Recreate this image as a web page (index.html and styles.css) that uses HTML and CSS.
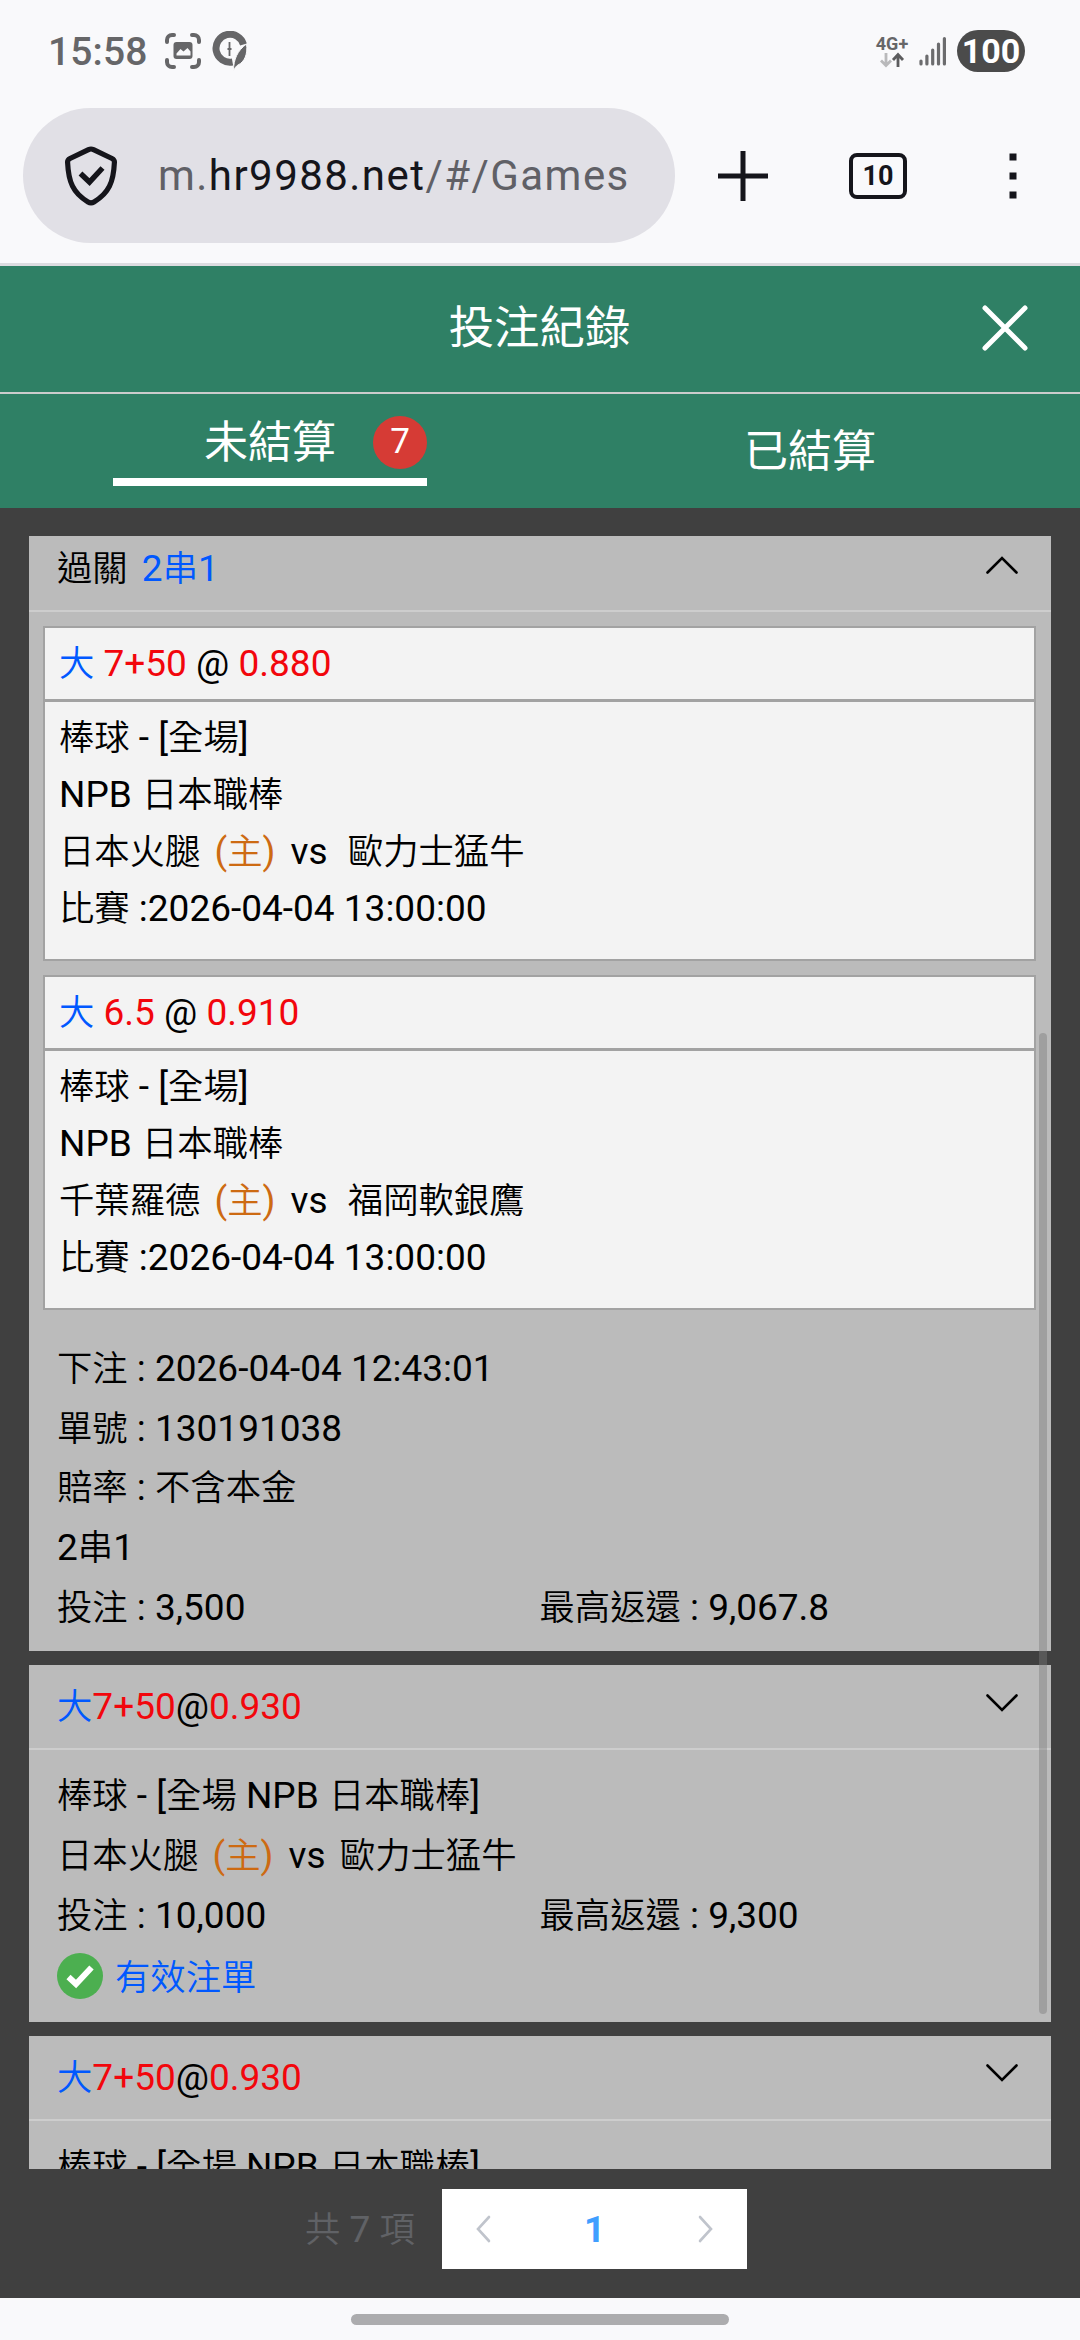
FILE: index.html
```html
<!DOCTYPE html>
<html lang="zh-Hant">
<head>
<meta charset="utf-8">
<title>投注紀錄</title>
<link rel="stylesheet" href="styles.css">
</head>
<body>
<div class="screen">
  <div class="status">
    <span class="clock">15:58</span>
    <svg class="ico-shot" width="36" height="36" viewBox="0 0 36 36" fill="none" stroke="#666668" stroke-width="4" stroke-linecap="round">
      <path d="M2 9V7a5 5 0 0 1 5-5h2M27 2h2a5 5 0 0 1 5 5v2M34 27v2a5 5 0 0 1-5 5h-2M9 34H7a5 5 0 0 1-5-5v-2"/>
      <rect x="8.500" y="9" width="19" height="17" rx="3" fill="#666668" stroke="none"/>
      <path d="M11.500 22.500v-2l4-4.500 3 2.500 4-3.500 3 3.500v4z" fill="#f9f9fb" stroke="none"/>
    </svg>
    <svg class="ico-pen" width="36" height="40" viewBox="0 0 36 40">
      <path d="M31.500 13.500A14 14 0 1 0 20.500 31" fill="none" stroke="#666668" stroke-width="7"/>
      <path d="M34.500 13c1.500 10-2 18-8.500 21-2 1-3 3-4.500 5.500 0-11 4-20 13-26.500z" fill="#666668" stroke="#f9f9fb" stroke-width="1"/>
      <path d="M17.500 11v14M15.500 18h4" stroke="#666668" stroke-width="1.800"/>
    </svg>
    <div class="net">
      <span>4G+</span>
      <svg width="26" height="16" viewBox="0 0 26 16" fill="none" stroke-width="2.800"><path d="M7 1v12M2 8.500l5 5 5-5" stroke="#b9b9bb"/><path d="M19 15V2.500M14 8l5-5.500L24 8" stroke="#5c5c5e"/></svg>
    </div>
    <svg class="signal" width="28" height="30" viewBox="0 0 28 30" stroke="#6c6c6e" stroke-width="3.200" stroke-linecap="round"><path d="M2 25v3M7.900 20v8M13.700 14v14M19.500 8v20M25.400 2.500V28"/></svg>
    <span class="battery">100</span>
  </div>

  <div class="toolbar">
    <div class="address">
      <svg width="54" height="60" viewBox="0 0 54 60" fill="none" stroke="#15151b" stroke-width="5.200" stroke-linejoin="round"><path d="M24.500 3.600q2.500-1.200 5 0L48 12.500q2.600 1.300 2.400 4C49.500 36 45 47 30 56q-3 1.800-6 0C9 47 4.500 36 3.600 16.500q-.2-2.700 2.400-4z"/><path d="M16.500 27.500l9 8.500 13-14" stroke-linejoin="miter" stroke-width="5.500"/></svg>
      <span class="url">m.<b>hr9988.net</b>/#/Games</span>
    </div>
    <svg class="plus" width="50" height="50" viewBox="0 0 50 50" stroke="#15151b" stroke-width="5"><path d="M25 0v50M0 25h50"/></svg>
    <span class="tabs-count">10</span>
    <svg class="more" width="8" height="48" viewBox="0 0 8 48" fill="#15151b"><path d="M.5 1.500h7v7h-7zM.5 20.500h7v7h-7zM.5 39.500h7v7h-7z"/></svg>
  </div>

  <header class="title-bar">
    <h1>投注紀錄</h1>
    <svg class="close" width="46" height="46" viewBox="0 0 46 46" stroke="#fff" stroke-width="5" stroke-linecap="round"><path d="M3 3l40 40M43 3L3 43"/></svg>
  </header>

  <nav class="tabs">
    <div class="tab"><div class="tab-on"><span class="label">未結算</span><i class="badge">7</i></div></div>
    <div class="tab"><span class="label">已結算</span></div>
  </nav>

  <main class="records">
    <div class="list">
      <section class="card">
        <div class="head"><div><span class="zh">過關</span> <span class="blue gap-s">2<span class="zh">串</span>1</span></div>
          <svg class="chev" width="34" height="20" viewBox="0 0 34 20"><path d="M2.500 17.500L17 3l14.500 14.500"/></svg></div>
        <div class="legs">
          <article class="leg">
            <div class="pick"><span class="zh blue">大</span> <span class="red">7+50</span> @ <span class="red">0.880</span></div>
            <div class="info">
              <p><span class="zh">棒球</span> - [<span class="zh">全場</span>]</p>
              <p>NPB <span class="zh gap-xs">日本職棒</span></p>
              <p><span class="zh">日本火腿</span> <span class="home">(<span class="zh">主</span>)</span> <span class="vs">vs</span> <span class="zh away">歐力士猛牛</span></p>
              <p><span class="zh">比賽</span> :2026-04-04 13:00:00</p>
            </div>
          </article>
          <article class="leg">
            <div class="pick"><span class="zh blue">大</span> <span class="red">6.5</span> @ <span class="red">0.910</span></div>
            <div class="info">
              <p><span class="zh">棒球</span> - [<span class="zh">全場</span>]</p>
              <p>NPB <span class="zh gap-xs">日本職棒</span></p>
              <p><span class="zh">千葉羅德</span> <span class="home">(<span class="zh">主</span>)</span> <span class="vs">vs</span> <span class="zh away">福岡軟銀鷹</span></p>
              <p><span class="zh">比賽</span> :2026-04-04 13:00:00</p>
            </div>
          </article>
        </div>
        <div class="body">
          <p><span class="zh">下注</span> : 2026-04-04 12:43:01</p>
          <p><span class="zh">單號</span> : 130191038</p>
          <p><span class="zh">賠率</span> : <span class="zh">不含本金</span></p>
          <p>2<span class="zh">串</span>1</p>
          <div class="money"><p><span class="zh">投注</span> : 3,500</p><p><span class="zh">最高返還</span> : 9,067.8</p></div>
        </div>
      </section>

      <section class="card">
        <div class="head"><div><span class="zh blue">大</span><span class="red">7+50</span>@<span class="red">0.930</span></div>
          <svg class="chev" width="34" height="20" viewBox="0 0 34 20"><path d="M2.500 2.500L17 17 31.500 2.500"/></svg></div>
        <div class="body">
          <p><span class="zh">棒球</span> - [<span class="zh">全場</span> NPB <span class="zh gap-xs">日本職棒</span>]</p>
          <p><span class="zh">日本火腿</span> <span class="home">(<span class="zh">主</span>)</span> <span class="vs">vs</span> <span class="zh away">歐力士猛牛</span></p>
          <div class="money"><p><span class="zh">投注</span> : 10,000</p><p><span class="zh">最高返還</span> : 9,300</p></div>
          <div class="valid"><svg width="46" height="46" viewBox="0 0 46 46"><circle cx="23" cy="23" r="23" fill="#4caf50"/><path d="M11.500 24l7.500 7L34.500 14.500" fill="none" stroke="#fff" stroke-width="6"/></svg><span class="zh blue">有效注單</span></div>
        </div>
      </section>

      <section class="card">
        <div class="head"><div><span class="zh blue">大</span><span class="red">7+50</span>@<span class="red">0.930</span></div>
          <svg class="chev" width="34" height="20" viewBox="0 0 34 20"><path d="M2.500 2.500L17 17 31.500 2.500"/></svg></div>
        <div class="body">
          <p><span class="zh">棒球</span> - [<span class="zh">全場</span> NPB <span class="zh gap-xs">日本職棒</span>]</p>
        </div>
      </section>
      <i class="scrollbar"></i>
    </div>

    <div class="pager">
      <span class="total"><span class="zh">共</span> 7 <span class="zh">項</span></span>
      <div class="pages">
        <svg width="16" height="28" viewBox="0 0 16 28"><path d="M14 2L3 14l11 12"/></svg>
        <b>1</b>
        <svg width="16" height="28" viewBox="0 0 16 28"><path d="M2 2l11 12L2 26"/></svg>
      </div>
    </div>
  </main>

  <div class="gesture"><i></i></div>
</div>
</body>
</html>
```
FILE: styles.css
```css
* { box-sizing: border-box; }
body { margin: 0; background: #404040; }
h1, p { margin: 0; font-weight: 400; }
i { font-style: normal; }
svg { display: block; flex: none; }

.screen {
  width: 1080px;
  height: 2340px;
  overflow: hidden;
  display: flex;
  flex-direction: column;
  font-family: Roboto, "Noto Sans CJK TC", sans-serif;
  font-size: 37px;
  color: #000;
}

/* system status bar */
.status {
  height: 108px;
  padding: 0 55px 6px 48px;
  display: flex;
  align-items: center;
  background: #f9f9fb;
  color: #666668;
}
.clock { font-size: 39px; font-weight: 500; letter-spacing: .1px; width: 117px; padding-top: 2px; }
.ico-pen { margin-left: 11px; }
.net {
  margin-left: auto;
  width: 36px;
  display: flex;
  flex-direction: column;
  align-items: center;
  font-size: 18px;
  font-weight: 700;
  line-height: 17px;
}
.signal { margin-left: 9px; }
.battery {
  margin-left: 10px;
  width: 68px;
  height: 42px;
  border-radius: 21px;
  background: #4b4b4b;
  color: #fff;
  font-size: 34px;
  font-weight: 700;
  line-height: 43px;
  text-align: center;
}

/* browser toolbar */
.toolbar {
  height: 158px;
  padding: 0 63px 20px 23px;
  display: flex;
  align-items: center;
  background: #f9f9fb;
  border-bottom: 3px solid #dcdce0;
}
.address {
  width: 652px;
  height: 135px;
  border-radius: 68px;
  padding-left: 41px;
  display: flex;
  align-items: center;
  background: #e1e0e6;
}
.url { margin-left: 40px; font-size: 42px; letter-spacing: 1.45px; color: #606066; }
.url b { font-weight: 400; color: #15151b; }
.plus { margin-left: 43px; }
.tabs-count {
  margin-left: 81px;
  width: 58px;
  height: 46px;
  border: 4px solid #15151b;
  border-radius: 8px;
  font-size: 27px;
  font-weight: 700;
  line-height: 39px;
  text-align: center;
  color: #15151b;
}
.more { margin-left: auto; }

/* page heading */
.title-bar {
  height: 128px;
  padding: 0 52px 0 97px;
  display: flex;
  align-items: center;
  background: #2f8065;
  border-bottom: 2px solid #ccc;
  color: #fff;
}
.title-bar h1 { flex: 1; text-align: center; font-size: 45.4px; line-height: 60px; padding-bottom: 1px; }
.close { margin-bottom: 2px; }

.tabs {
  height: 114px;
  display: grid;
  grid-template-columns: 1fr 1fr;
  background: #2f8065;
  color: #fff;
  font-size: 44px;
}
.tab { display: flex; justify-content: center; align-items: center; }
.label { padding-bottom: 6px; }
.tab-on {
  width: 314px;
  height: 70px;
  border-bottom: 8px solid #fff;
  display: flex;
  align-items: center;
  justify-content: flex-end;
  padding-bottom: 10px;
}
.badge {
  width: 54px;
  height: 53px;
  margin-left: 37px;
  border-radius: 50%;
  background: #d63b35;
  font-size: 35px;
  line-height: 52px;
  text-align: center;
}

/* records */
.records { flex: 1; padding: 28px 29px 0; background: #404040; }
.list { position: relative; height: 1633px; overflow: hidden; }
.card { background: #bbb; margin-bottom: 14px; }
.card:first-child { margin-top: -9px; }
.zh { font-family: "Noto Sans CJK TC", sans-serif; font-size: 35.35px; font-weight: 350; line-height: 1; }
.blue { color: #0058ff; }
.red { color: #f2060c; }
.head {
  height: 85px;
  padding: 1px 32px 0 28px;
  display: flex;
  align-items: center;
  justify-content: space-between;
  line-height: 60px;
  border-bottom: 2px solid #cdcdcd;
}
.chev { margin-bottom: 9px; fill: none; stroke: #000; stroke-width: 2.6; stroke-linecap: round; }
.legs { padding: 14px 15px 13px 14px; display: grid; gap: 14px; }
.leg { height: 335px; border: 2px solid #a2a2a2; background: #f3f3f3; }
.pick { height: 74px; padding-left: 14px; line-height: 71px; border-bottom: 3px solid #a2a2a2; }
.info { padding: 7px 0 0 14px; }
.info p { height: 57px; line-height: 57px; }
.home { color: #cd6a12; margin: 0 4px 0 5px; }
.body { padding: 16px 29px 14px 28px; }
.body p { height: 59.7px; line-height: 59.7px; }
.money { display: grid; grid-template-columns: 1fr 1fr; }
.valid { height: 62px; padding-bottom: 1px; display: flex; align-items: center; gap: 12px; }
.valid .zh { padding-bottom: 3px; }
.gap-s { margin-left: 5px; }
.gap-xs { margin-left: 1px; }
.vs { margin-left: 2px; }
.away { margin-left: 5px; }
.leg .away { margin-left: 11px; }
.scrollbar {
  position: absolute;
  right: 4px;
  top: 497px;
  width: 8px;
  height: 981px;
  border-radius: 4px;
  background: rgba(122, 122, 122, .42);
}

/* pagination */
.pager { display: flex; align-items: center; padding: 20px 0 0 276px; }
.total { width: 137px; color: #606266; }
.pages {
  width: 305px;
  height: 80px;
  padding: 0 33px;
  display: flex;
  align-items: center;
  justify-content: space-between;
  background: #fff;
  color: #409eff;
}
.pages svg { fill: none; stroke: #c0c4cc; stroke-width: 2.6; stroke-linecap: round; }

.gesture { height: 42px; padding-top: 16px; background: #f9f9fb; }
.gesture i { display: block; width: 378px; height: 11px; margin: 0 auto; border-radius: 6px; background: #acacae; }
```
